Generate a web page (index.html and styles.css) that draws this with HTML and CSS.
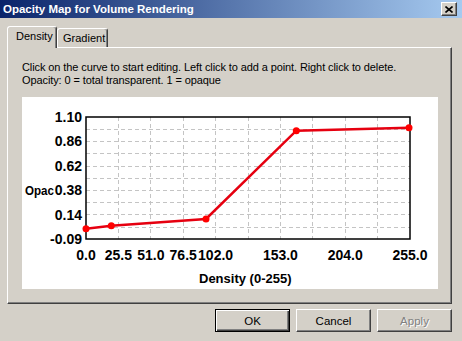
FILE: index.html
```html
<!DOCTYPE html>
<html lang="en">
<head>
  <meta charset="UTF-8" />
  <title>Opacity Map for Volume Rendering</title>
  <link rel="stylesheet" href="styles.css">
</head>
<body>
  <div class="titlebar">
    <span class="title">Opacity Map for Volume Rendering</span>
    <span class="close">
      <svg width="8" height="7" viewBox="0 0 8 7">
        <path d="M0.5 0.5 L7.5 6.5 M7.5 0.5 L0.5 6.5" stroke="#000" stroke-width="1.6" fill="none"/>
      </svg>
    </span>
  </div>

  <div class="dialog">
    <!-- Tabs -->
    <div class="tabs">
      <div class="tab active">Density</div>
      <div class="tab">Gradient</div>
    </div>

    <div class="panel">
      <p class="hint">Click on the curve to start editing. Left click to add a point. Right click to delete.</p>
      <p class="hint">Opacity: 0 = total transparent. 1 = opaque</p>

      <!-- Chart -->
      <div class="chart">
        <svg width="416" height="192" viewBox="0 0 416 192">
          <g class="grid">
            <line x1="64" y1="32.5" x2="388" y2="32.5"/>
            <line x1="64" y1="44.5" x2="388" y2="44.5"/>
            <line x1="64" y1="56.5" x2="388" y2="56.5"/>
            <line x1="64" y1="69.5" x2="388" y2="69.5"/>
            <line x1="64" y1="81.5" x2="388" y2="81.5"/>
            <line x1="64" y1="93.5" x2="388" y2="93.5"/>
            <line x1="64" y1="105.5" x2="388" y2="105.5"/>
            <line x1="64" y1="117.5" x2="388" y2="117.5"/>
            <line x1="64" y1="130.5" x2="388" y2="130.5"/>
            <line x1="96.5" y1="20" x2="96.5" y2="142"/>
            <line x1="128.5" y1="20" x2="128.5" y2="142"/>
            <line x1="161.5" y1="20" x2="161.5" y2="142"/>
            <line x1="193.5" y1="20" x2="193.5" y2="142"/>
            <line x1="226.5" y1="20" x2="226.5" y2="142"/>
            <line x1="258.5" y1="20" x2="258.5" y2="142"/>
            <line x1="290.5" y1="20" x2="290.5" y2="142"/>
            <line x1="323.5" y1="20" x2="323.5" y2="142"/>
            <line x1="355.5" y1="20" x2="355.5" y2="142"/>
          </g>
          <rect x="64" y="20" width="324" height="122" fill="none" stroke="#000" stroke-width="1.5"/>

          <text class="axis-title" x="3" y="98" textLength="29" lengthAdjust="spacingAndGlyphs">Opac</text>

          <g class="ticks">
            <text x="60" y="25" text-anchor="end">1.10</text>
            <text x="60" y="49" text-anchor="end">0.86</text>
            <text x="60" y="74" text-anchor="end">0.62</text>
            <text x="60" y="98" text-anchor="end">0.38</text>
            <text x="60" y="123" text-anchor="end">0.14</text>
            <text x="60" y="147" text-anchor="end">-0.09</text>

            <text x="64" y="163" text-anchor="middle">0.0</text>
            <text x="96.4" y="163" text-anchor="middle">25.5</text>
            <text x="128.8" y="163" text-anchor="middle">51.0</text>
            <text x="161.2" y="163" text-anchor="middle">76.5</text>
            <text x="193.6" y="163" text-anchor="middle">102.0</text>
            <text x="258.4" y="163" text-anchor="middle">153.0</text>
            <text x="323.2" y="163" text-anchor="middle">204.0</text>
            <text x="388" y="163" text-anchor="middle">255.0</text>
          </g>

          <text class="axis-title" x="177" y="186">Density (0-255)</text>

          <polyline class="curve" points="64,131.7 89.3,128.7 184,122 274.3,33.7 387,30.7"/>
          <g class="points">
            <circle cx="64" cy="131.7" r="3.5"/>
            <circle cx="89.3" cy="128.7" r="3.5"/>
            <circle cx="184" cy="122" r="3.5"/>
            <circle cx="274.3" cy="33.7" r="3.5"/>
            <circle cx="387" cy="30.7" r="3.5"/>
          </g>
        </svg>
      </div>
    </div>

    <!-- Dialog buttons -->
    <div class="buttons">
      <button class="btn default">OK</button>
      <button class="btn">Cancel</button>
      <button class="btn" disabled>Apply</button>
    </div>
  </div>
</body>
</html>
```

FILE: styles.css
```css
* { box-sizing: border-box; }

body {
  margin: 0;
  width: 462px;
  height: 341px;
  overflow: hidden;
  background: #d4d0c8;
  font-family: "Liberation Sans", Arial, sans-serif;
  font-size: 11px;
  color: #000;
}

.titlebar {
  height: 18px;
  display: flex;
  align-items: center;
  justify-content: space-between;
  padding: 0 5px 0 3px;
  background: linear-gradient(to right, #0a246a, #a6caf0);
  color: #fff;
  font-size: 11.5px;
  font-weight: bold;
}

.close {
  width: 16px;
  height: 14px;
  display: flex;
  align-items: center;
  justify-content: center;
  background: #d4d0c8;
  border: 1px solid;
  border-color: #fff #404040 #404040 #fff;
  box-shadow: inset -1px -1px #808080;
}

.dialog { padding: 8px 10px 0 7px; }

.tabs {
  display: flex;
  align-items: flex-end;
  height: 21px;
}

.tab {
  width: 51px;
  height: 19px;
  padding: 3px 0 0 5px;
  border: 1px solid;
  border-bottom: none;
  border-color: #fff #404040 transparent #fff;
  border-radius: 3px 3px 0 0;
  box-shadow: inset -1px 0 #808080;
  background: #d4d0c8;
  font-size: 11px;
}

.tab.active {
  position: relative;
  z-index: 1;
  width: 50px;
  height: 22px;
  margin-bottom: -1px;
  padding: 3px 0 0 8px;
}

.panel {
  height: 257px;
  padding: 13px 13px 0 14px;
  border: 1px solid;
  border-color: #fff #404040 #404040 #fff;
  box-shadow: inset -1px -1px #808080;
}

.hint {
  margin: 0;
  line-height: 13px;
  letter-spacing: -0.1px;
}

.chart {
  width: 416px;
  height: 192px;
  margin-top: 10px;
  background: #fff;
}

.chart svg { display: block; }

.grid line {
  stroke: #c4c4c4;
  stroke-width: 1;
  stroke-dasharray: 4 3;
  shape-rendering: crispEdges;
}

.ticks text,
.axis-title {
  font-family: "Liberation Sans", Arial, sans-serif;
  font-size: 14px;
  font-weight: bold;
  fill: #000;
}

.axis-title { font-size: 13px; }

.curve {
  fill: none;
  stroke: #e60010;
  stroke-width: 2.5;
}

.points circle { fill: #ff0000; }

.buttons {
  display: flex;
  justify-content: flex-end;
  gap: 6px;
  margin-top: 5px;
}

.btn {
  width: 75px;
  height: 23px;
  padding: 0;
  font-family: "Liberation Sans", Arial, sans-serif;
  font-size: 11.5px;
  color: #000;
  background: #d4d0c8;
  border: 1px solid;
  border-color: #fff #404040 #404040 #fff;
  box-shadow: inset -1px -1px #808080;
}

.btn.default {
  border-color: #000;
  box-shadow: inset 1px 1px #fff, inset -1px -1px #404040, inset -2px -2px #808080;
}

.btn:disabled {
  color: #808080;
  text-shadow: 1px 1px #fff;
}
```
